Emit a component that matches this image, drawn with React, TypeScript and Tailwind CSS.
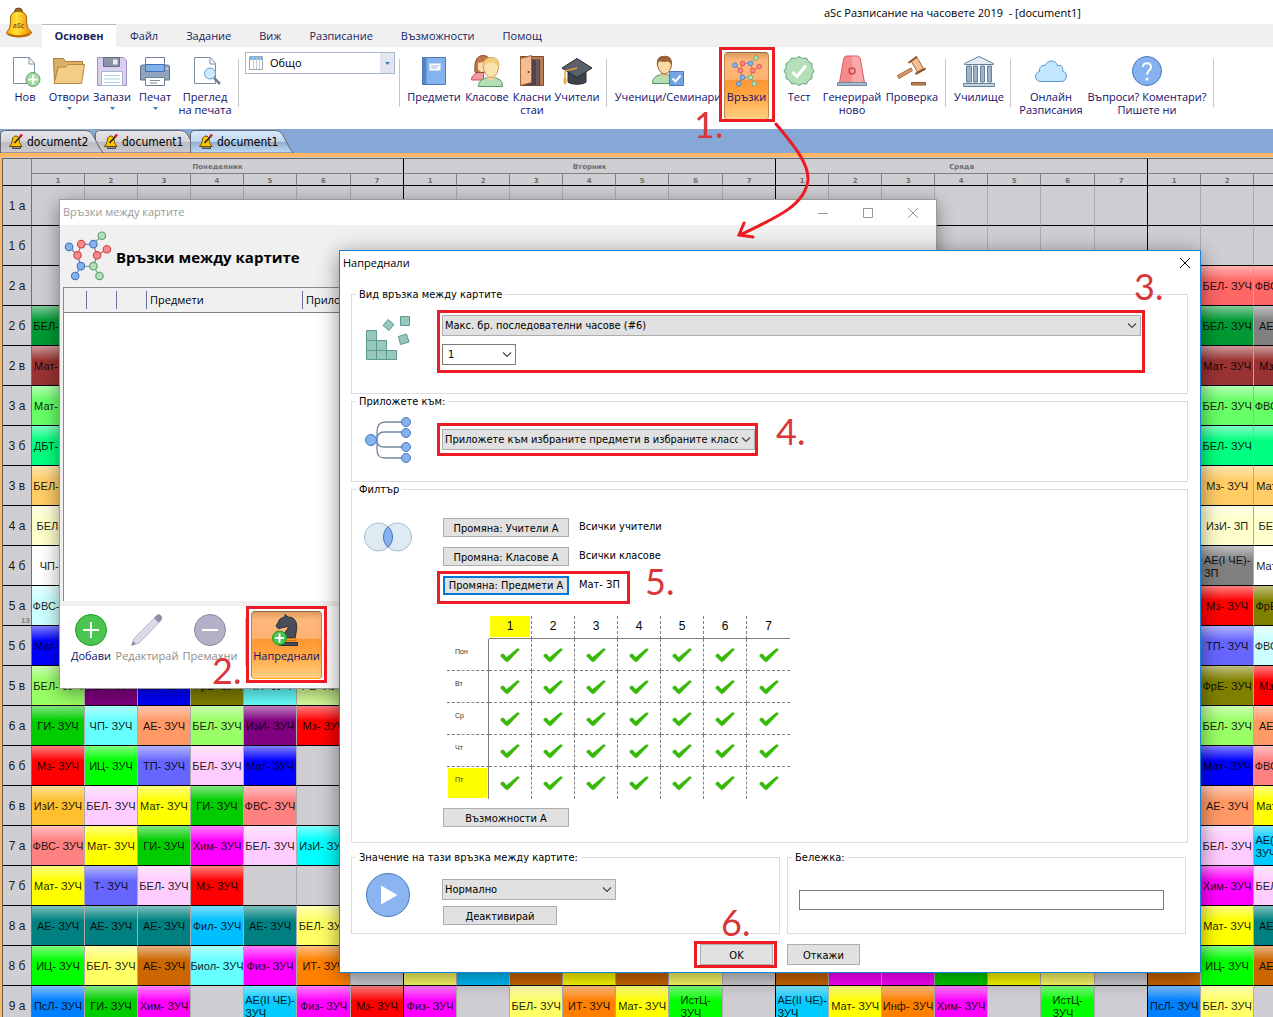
import React from 'react';

type Cell = [text: string, color: string];

const COLORS: Record<string, string> = {
    coral: 'bg-[#ff6666]',
    forest: 'bg-[#009933]',
    gray: 'bg-[#808080]',
    brick: 'bg-[#993333]',
    mint: 'bg-[#66ff66]',
    spring: 'bg-[#00ff80]',
    sand: 'bg-[#ffcc66]',
    cream: 'bg-[#ffffcc]',
    white: 'bg-white',
    ice: 'bg-[#ccffff]',
    red: 'bg-[#ff0000]',
    olive: 'bg-[#808000]',
    blue: 'bg-[#0000ff]',
    violet: 'bg-[#6666ff]',
    apple: 'bg-[#99ff66]',
    purple: 'bg-[#800080]',
    aqua: 'bg-[#66ffff]',
    pale: 'bg-[#d8ff99]',
    green: 'bg-[#00cc00]',
    peach: 'bg-[#ff9966]',
    lime: 'bg-[#00ff00]',
    pink: 'bg-[#ffccff]',
    salmon: 'bg-[#ff8080]',
    amber: 'bg-[#ffc030]',
    yellow: 'bg-[#ffff00]',
    magenta: 'bg-[#ff00ff]',
    cyan: 'bg-[#00ffff]',
    sky: 'bg-[#00ccff]',
    azure: 'bg-[#00bfff]',
    teal: 'bg-[#008080]',
    lemon: 'bg-[#ffff66]',
    brown: 'bg-[#cc6600]',
    orange: 'bg-[#ff8000]',
    royal: 'bg-[#0080ff]',
};

// cells are keyed by column index: 7 lessons a day, starting on Monday
// a line break in the text splits a long subject name over two lines
const ROWS: { name: string; note?: string; cells: Record<number, Cell> }[] = [
    { name: '1 а', cells: {} },
    { name: '1 б', cells: {} },
    { name: '2 а', cells: { 22: ['БЕЛ- ЗУЧ', 'coral'], 23: ['ФВС- ЗУЧ', 'coral'] } },
    { name: '2 б', cells: { 0: ['БЕЛ- ЗУЧ', 'forest'], 22: ['БЕЛ- ЗУЧ', 'forest'], 23: ['АЕ- ЗУЧ', 'gray'] } },
    { name: '2 в', cells: { 0: ['Мат- ЗУЧ', 'brick'], 22: ['Мат- ЗУЧ', 'brick'], 23: ['Мз- ЗУЧ', 'brick'] } },
    { name: '3 а', cells: { 0: ['Мат- ЗУЧ', 'mint'], 22: ['БЕЛ- ЗУЧ', 'mint'], 23: ['ФВС- ЗУЧ', 'mint'] } },
    { name: '3 б', cells: { 0: ['ДБТ- ЗУЧ', 'spring'], 22: ['БЕЛ- ЗУЧ', 'spring'], 23: ['', 'spring'] } },
    { name: '3 в', cells: { 0: ['БЕЛ- ЗУЧ', 'sand'], 22: ['Мз- ЗУЧ', 'sand'], 23: ['Мат- ЗУЧ', 'sand'] } },
    { name: '4 а', cells: { 0: ['БЕЛ- ЗП', 'cream'], 22: ['ИзИ- ЗП', 'cream'], 23: ['БЕЛ- ЗП', 'cream'] } },
    { name: '4 б', cells: { 0: ['ЧП- ЗП', 'white'], 22: ['АЕ(I ЧЕ)-\nЗП', 'gray'], 23: ['Мат- ЗУЧ', 'white'] } },
    { name: '5 а', note: '13', cells: { 0: ['ФВС- ЗУЧ', 'ice'], 22: ['Мз- ЗУЧ', 'red'], 23: ['ФрЕ- ЗУЧ', 'olive'] } },
    { name: '5 б', cells: { 0: ['Мат- ЗУЧ', 'blue'], 22: ['ТП- ЗУЧ', 'violet'], 23: ['ФВС- ЗУЧ', 'ice'] } },
    {
        name: '5 в',
        cells: {
            0: ['БЕЛ- ЗУЧ', 'apple'], 1: ['ИзИ- ЗУЧ', 'purple'], 2: ['Мат- ЗУЧ', 'blue'], 3: ['ФрЕ- ЗУЧ', 'olive'],
            4: ['ЧП- ЗУЧ', 'aqua'], 5: ['РЕ- ИУЧ', 'pale'], 22: ['ФрЕ- ЗУЧ', 'olive'], 23: ['Мз- ЗУЧ', 'red'],
        },
    },
    {
        name: '6 а',
        cells: {
            0: ['ГИ- ЗУЧ', 'green'], 1: ['ЧП- ЗУЧ', 'aqua'], 2: ['АЕ- ЗУЧ', 'peach'], 3: ['БЕЛ- ЗУЧ', 'apple'],
            4: ['ИзИ- ЗУЧ', 'purple'], 5: ['Мз- ЗУЧ', 'red'], 22: ['БЕЛ- ЗУЧ', 'apple'], 23: ['АЕ- ЗУЧ', 'peach'],
        },
    },
    {
        name: '6 б',
        cells: {
            0: ['Мз- ЗУЧ', 'red'], 1: ['ИЦ- ЗУЧ', 'lime'], 2: ['ТП- ЗУЧ', 'violet'], 3: ['БЕЛ- ЗУЧ', 'pink'],
            4: ['Мат- ЗУЧ', 'blue'], 22: ['Мат- ЗУЧ', 'blue'], 23: ['ФВС- ЗУЧ', 'salmon'],
        },
    },
    {
        name: '6 в',
        cells: {
            0: ['ИзИ- ЗУЧ', 'amber'], 1: ['БЕЛ- ЗУЧ', 'pink'], 2: ['Мат- ЗУЧ', 'yellow'], 3: ['ГИ- ЗУЧ', 'green'],
            4: ['ФВС- ЗУЧ', 'salmon'], 22: ['АЕ- ЗУЧ', 'peach'], 23: ['Мат- ЗУЧ', 'yellow'],
        },
    },
    {
        name: '7 а',
        cells: {
            0: ['ФВС- ЗУЧ', 'salmon'], 1: ['Мат- ЗУЧ', 'yellow'], 2: ['ГИ- ЗУЧ', 'green'], 3: ['Хим- ЗУЧ', 'magenta'],
            4: ['БЕЛ- ЗУЧ', 'pink'], 5: ['ИзИ- ЗУЧ', 'cyan'], 22: ['БЕЛ- ЗУЧ', 'pink'], 23: ['АЕ(II ЧЕ)-\nЗУЧ', 'sky'],
        },
    },
    {
        name: '7 б',
        cells: {
            0: ['Мат- ЗУЧ', 'yellow'], 1: ['Т- ЗУЧ', 'violet'], 2: ['БЕЛ- ЗУЧ', 'pink'], 3: ['Мз- ЗУЧ', 'red'],
            22: ['Хим- ЗУЧ', 'magenta'], 23: ['БЕЛ- ЗУЧ', 'pink'],
        },
    },
    {
        name: '8 а',
        cells: {
            0: ['АЕ- ЗУЧ', 'teal'], 1: ['АЕ- ЗУЧ', 'teal'], 2: ['АЕ- ЗУЧ', 'teal'], 3: ['Фил- ЗУЧ', 'azure'],
            4: ['АЕ- ЗУЧ', 'teal'], 5: ['БЕЛ- ЗУЧ', 'lemon'], 22: ['Мат- ЗУЧ', 'yellow'], 23: ['АЕ- ЗУЧ', 'teal'],
        },
    },
    {
        name: '8 б',
        cells: {
            0: ['ИЦ- ЗУЧ', 'lime'], 1: ['БЕЛ- ЗУЧ', 'lemon'], 2: ['АЕ- ЗУЧ', 'brown'], 3: ['Биол- ЗУЧ', 'aqua'],
            4: ['Физ- ЗУЧ', 'magenta'], 5: ['ИТ- ЗУЧ', 'orange'], 7: ['', 'lemon'], 8: ['', 'azure'], 9: ['', 'brown'],
            10: ['', 'yellow'], 11: ['', 'brown'], 12: ['', 'lemon'], 14: ['', 'brown'], 15: ['', 'magenta'],
            16: ['', 'magenta'], 17: ['', 'green'], 18: ['', 'yellow'], 19: ['', 'lemon'], 21: ['', 'brown'],
            22: ['ИЦ- ЗУЧ', 'lime'], 23: ['АЕ- ЗУЧ', 'brown'],
        },
    },
    {
        name: '9 а',
        cells: {
            0: ['ПсЛ- ЗУЧ', 'royal'], 1: ['ГИ- ЗУЧ', 'green'], 2: ['Хим- ЗУЧ', 'magenta'], 4: ['АЕ(II ЧЕ)-\nЗУЧ', 'sky'],
            5: ['Физ- ЗУЧ', 'magenta'], 6: ['Мз- ЗУЧ', 'red'], 7: ['Физ- ЗУЧ', 'magenta'], 9: ['БЕЛ- ЗУЧ', 'lemon'],
            10: ['ИТ- ЗУЧ', 'orange'], 11: ['Мат- ЗУЧ', 'yellow'], 12: ['ИстЦ-\nЗУЧ', 'lime'], 14: ['АЕ(II ЧЕ)-\nЗУЧ', 'sky'],
            15: ['Мат- ЗУЧ', 'yellow'], 16: ['Инф- ЗУЧ', 'orange'], 17: ['Хим- ЗУЧ', 'magenta'], 19: ['ИстЦ-\nЗУЧ', 'lime'],
            21: ['ПсЛ- ЗУЧ', 'royal'], 22: ['БЕЛ- ЗУЧ', 'lemon'],
        },
    },
];

const DAYS = ['Понеделник', 'Вторник', 'Сряда', ''];
const COLUMNS = Array.from({ length: 28 }, (_, i) => i);

/* ---------- icons ---------- */

const Svg: React.FC<{ children: React.ReactNode; className?: string; viewBox?: string }> = ({
    children,
    className = 'w-8 h-8',
    viewBox = '0 0 32 32',
}) => (
    <svg viewBox={viewBox} className={`shrink-0 ${className}`} fill="none" aria-hidden="true">
        {children}
    </svg>
);

const NewIcon = () => (
    <Svg>
        <path d="M4.500 2.500h16l5 6v20h-21z M20 2.500v6.500h5.500" fill="#fff" stroke="#7d8ea0" />
        <circle cx="24" cy="24.500" r="7" fill="#a5d9a8" stroke="#5fa272" />
        <path d="M24 20v9M19.500 24.500h9" stroke="#fff" strokeWidth="2" />
    </Svg>
);

const OpenIcon = () => (
    <Svg>
        <path d="M.5 3.500h10l2 3h17v6H5l-3.500 15z" fill="#dcae66" stroke="#a87b3a" />
        <path d="M1 28.500L5.500 12h7l3-2.500h16L28.500 28.500z" fill="#f3cd84" stroke="#b3864a" />
    </Svg>
);

const SaveIcon = () => (
    <Svg>
        <path d="M1.500 2.500h26l3 3v25h-29z" fill="#dcd0f0" stroke="#a08fc0" />
        <path d="M7.500 2.500h16v9h-16z" fill="#8b95a5" stroke="#66707f" />
        <path d="M17 4.500h4.500v5H17z" fill="#e8edf3" />
        <path d="M5.500 16.500h21v14h-21z" fill="#fff" stroke="#a9b4c8" />
        <path d="M8 20.500h16M8 24h16M8 27.500h16" stroke="#aed6f2" />
    </Svg>
);

const PrintIcon = () => (
    <Svg>
        <path d="M6.500 2.500h19v10h-19z" fill="#fff" stroke="#6f8095" />
        <path d="M1.500 12c0-2 1-2 3-2h23c2 0 3 0 3 2v13h-29z" fill="#8fa3ba" stroke="#5d7189" />
        <path d="M6.500 9.500h19v7h-19z" fill="#82b1ea" stroke="#3f6fb5" />
        <circle cx="28" cy="13.500" r="1" fill="#ffe08a" />
        <path d="M6.500 22.500h19v8h-19z" fill="#fff" stroke="#6f8095" />
        <path d="M11 25.500h10M11 28h7" stroke="#7d8ea0" />
    </Svg>
);

const PreviewIcon = () => (
    <Svg>
        <path d="M5.500 2.500h16l5 6v20h-21z M21 2.500v6.500h5.500" fill="#fff" stroke="#7d8ea0" />
        <circle cx="21" cy="18.500" r="5.500" fill="#cdeafd" stroke="#6a9ccc" />
        <path d="M25 23l6 6" stroke="#6d8096" strokeWidth="2.500" />
    </Svg>
);

const BookIcon = () => (
    <Svg>
        <path d="M4.500 2.500h23v27h-23z" fill="#85b3ef" stroke="#4a78b8" />
        <path d="M5 3h3.500v26H5z" fill="#5585c6" />
        <path d="M11.500 8.500h11v7h-11z" fill="#fff" stroke="#c3d8f5" />
        <path d="M13 11h8M13 13h6" stroke="#9db7dc" />
    </Svg>
);

const ClassesIcon = () => (
    <Svg>
        <path d="M.5 25c0-5 4-7 9-8h3v8z" fill="#f59aa3" stroke="#c9525e" />
        <path d="M4 17C3 8 5 .5 12 .5c5 0 7 3 7 8v9H5z" fill="#bf7549" stroke="#8e5230" />
        <path d="M7 8c3-1 6-1 8-3v9c-2 4-6 4-8 0z" fill="#fbdcb0" />
        <path d="M7.500 31.500c0-6 4-8 10-9h5c6 1 9 3 9 9z" fill="#b4dfb4" stroke="#4f9463" />
        <path d="M16.500 18h7v6l-3.500 2-3.500-2z" fill="#f5d193" />
        <path d="M12.500 12c-1-6 3-9.500 8-9.500 6 0 8 4 7 10-1 7-4 10-7.500 10S13 18 12.500 12z" fill="#fbe3b0" stroke="#b99a5a" />
        <path d="M12.500 12c-1-6 3-9.500 8-9.500 6 0 8 4 7 10-2-4-5-5-7-5s-6 1-8 4.500z" fill="#f0cc78" />
    </Svg>
);

const DoorIcon = () => (
    <Svg>
        <path d="M4.500 1.500h23v29h-23z" fill="#b57d54" stroke="#7c4b2b" />
        <path d="M8 4.500h16v26H8z" fill="#54414a" />
        <path d="M20 4.500h3v26h-3z" fill="#6d565c" />
        <path d="M4.500 3.500l11-3v27l-11 3z" fill="#f6bd91" stroke="#9c6239" />
        <circle cx="12.500" cy="17" r="1" fill="#6b3a22" />
    </Svg>
);

const TeacherIcon = () => (
    <Svg>
        <path d="M7 14h18v13c-3 3-15 3-18 0z" fill="#3e434b" stroke="#262a31" />
        <path d="M1 13L16 3.500 31 13 16 22.500z" fill="#5b616b" stroke="#23272e" />
        <path d="M16 13L4 16v9" stroke="#e8a33a" strokeWidth="1.500" />
        <path d="M2.500 23h3v5l-1.500 2-1.500-2z" fill="#f0ad45" />
    </Svg>
);

const StudentsIcon = () => (
    <Svg>
        <path d="M.5 28.500c0-6 4-8 9-9h4c5 1 8 3 8 9z" fill="#b4dfb4" stroke="#4f9463" />
        <path d="M8.500 15h7v5l-3.500 3-3.500-3z" fill="#ecc389" />
        <path d="M5.500 9c0-5 2-7.500 7-7.500s7 3 7 7.500-3 10-7 10-7-6-7-10z" fill="#fbd9a2" stroke="#8c5a35" />
        <path d="M5 11C4 4 7 .8 12.500 .8S21 4 19.500 11c-1-3-2-4-4-4.500-3 1-6 0-8 0-1 1-2 2-2.500 4.500z" fill="#9c6239" />
        <path d="M17.500 16.500h14v14h-14z" fill="#74a3e3" stroke="#4a78b8" />
        <path d="M20.500 23.500l3 3 5-6" stroke="#fff" strokeWidth="2" />
    </Svg>
);

const NODES: [number, number, string][] = [
    [305, 132, 'g'], [208, 165, 'b'], [244, 157, 'r'], [280, 157, 'b'], [233, 190, 'r'], [291, 190, 'r'],
    [320, 172, 'r'], [243, 222, 'b'], [280, 222, 'g'], [226, 251, 'b'], [298, 251, 'g'],
];
const FILL: Record<string, string> = { g: '#b4dfb8', b: '#86b2f0', r: '#f78b8b' };
const STROKE: Record<string, string> = { g: '#5fa272', b: '#4677bd', r: '#d0484d' };

const RelationsIcon: React.FC<{ className?: string }> = ({ className = 'w-8 h-8' }) => (
    <Svg className={className} viewBox="194 118 140 148">
        <path d="M208 165L233 190L243 222L226 251M280 157L244 157" stroke="#4677bd" strokeWidth="3" />
        <path d="M244 157L233 190M280 157L291 190L320 172M291 190L280 222" stroke="#d0484d" strokeWidth="3" />
        <path d="M280 157L305 132M243 222L280 222L298 251" stroke="#5fa272" strokeWidth="3" />
        {NODES.map(([x, y, c]) => (
            <circle key={`${x}-${y}`} cx={x} cy={y} r="11" fill={FILL[c]} stroke={STROKE[c]} strokeWidth="3.500" />
        ))}
    </Svg>
);

const TestIcon = () => (
    <Svg>
        <path
            d="M16 1.500l3.500 2 4-.5 2 3.500 3.500 2-.2 4L31 16l-2.200 3.500.2 4-3.500 2-2 3.500-4-.5-3.500 2-3.500-2-4 .5-2-3.500-3.500-2 .2-4L1 16l2.200-3.500-.2-4 3.500-2L8.500 3l4 .5z"
            fill="#b4dfb8"
            stroke="#5fa272"
        />
        <path d="M9.500 17l4.500 4.500 9-11" stroke="#fff" strokeWidth="3" />
    </Svg>
);

const SirenIcon = () => (
    <Svg>
        <path d="M3.500 27.500L8 2.500l2-1.500h12l2 1.500 4.500 25z" fill="#f78b8b" stroke="#d95c62" />
        <path d="M16 1.500h6l1.500 1.500 4 24H16z" fill="#f9a9a9" />
        <circle cx="16" cy="16" r="3" stroke="#d0484d" strokeWidth="1.500" />
        <path d="M1.500 27.500h29v3h-29z" fill="#a7bccd" stroke="#7188a0" />
    </Svg>
);

const GavelIcon = () => (
    <Svg>
        <path d="M1.500 20.500L15 13l1.500 2.500L3 23.500z" fill="#dc9a68" stroke="#a3683e" />
        <path d="M15 6l6-3.500 6.500 11-6 3.500z" fill="#f6bd91" stroke="#a3683e" />
        <path d="M12.500 8L21 1.500M19.500 19l10-5.500" stroke="#8e5733" strokeWidth="2" />
        <path d="M15.500 27.500h14v2.500h-14z" fill="#c38659" stroke="#8e5733" />
    </Svg>
);

const SchoolIcon = () => (
    <Svg>
        <path d="M1.500 8.500L16 1.500l14.500 7v1h-29z" fill="#e0ebf3" stroke="#66809a" />
        <path d="M3.500 11h5v16h-5zM10.500 11h4v16h-4zM17.500 11h4v16h-4zM24.500 11h4v16h-4z" fill="#9db3c8" stroke="#66809a" />
        <path d="M.5 28.500h31v3H.5z" fill="#c3d3e0" stroke="#66809a" />
    </Svg>
);

const CloudIcon = () => (
    <Svg>
        <path
            d="M6 26.500c-7 0-7-9-1.500-10C4 12 7 9.500 10 10.500c2-6 11-6 12.500 0 4-1 6 2 5 5.500 5.500 1 5.500 10.500-1.500 10.500z"
            fill="#c2e6fd"
            stroke="#5c93d1"
        />
    </Svg>
);

const HelpIcon = () => (
    <Svg>
        <circle cx="16" cy="16" r="14.500" fill="#86b2f0" stroke="#4677bd" />
        <path d="M12 12c0-5 8-5 8 0 0 3.500-4 3.500-4 7.500" stroke="#fff" strokeWidth="2" />
        <circle cx="16" cy="24" r="1.500" fill="#fff" />
    </Svg>
);

const AddIcon = () => (
    <Svg>
        <circle cx="16" cy="16" r="15.500" fill="#4bc451" stroke="#14a01c" />
        <path d="M16 8v16M8 16h16" stroke="#fff" strokeWidth="2" />
    </Svg>
);

const EditIcon = () => (
    <Svg>
        <path d="M.5 31.500l2.500-7L25.500 2c3-3 7 1 4.500 4.500L8 29z" fill="#dcdae8" stroke="#b4b2c6" />
        <path d="M25.500 1.500c3-3 7 1 4.500 4.500l-2.500 2.500-4.500-4.500z" fill="#8f8da6" />
        <path d="M.5 31.500l1.500-4.500 3 3z" fill="#8f8da6" />
    </Svg>
);

const RemoveIcon = () => (
    <Svg>
        <circle cx="16" cy="16" r="15.500" fill="#b3b1c8" stroke="#8c8aa6" />
        <path d="M8 16h16" stroke="#fff" strokeWidth="2" />
    </Svg>
);

const KnightIcon = () => (
    <Svg>
        <path
            d="M12 24c0-6 6-8 5-12-3 2-5 1-7 2l-3 .5-2-2.500 4-7 5-2.500V.5l3 2.500c8 0 10 7 8 16l-1 5z"
            fill="#484e59"
            stroke="#2a2e36"
        />
        <path d="M12 24.500h13v2H12z" fill="#ff9b33" stroke="#c97316" />
        <path d="M8.500 28.500h18v3h-18z" fill="#484e59" stroke="#2a2e36" />
        <circle cx="8.500" cy="24" r="7" fill="#4bc451" stroke="#14a01c" />
        <path d="M8.500 19.500v9M4 24h9" stroke="#fff" strokeWidth="2" />
    </Svg>
);

const BlocksIcon = () => (
    <Svg className="w-12 h-12" viewBox="0 0 48 48">
        <g fill="#9ac7bb" stroke="#5b9a92">
            <path d="M2.500 16.500h10v10h-10zM2.500 26.500h10v10h-10zM12.500 26.500h10v10h-10zM2.500 36.500h10v9h-10zM12.500 36.500h10v9h-10zM22.500 36.500h10v9h-10z" />
            <path d="M36.500 2.500h9v9h-9zM24 5.500l6 5-5 6-6-5zM34.500 22.500l8-2.500 2.500 8-8.500 2.500z" />
        </g>
    </Svg>
);

const TreeIcon = () => (
    <Svg className="w-12 h-12" viewBox="0 0 48 48">
        <path
            d="M42 6H21q-8 0-8 10v18q0 8 8 8h21M42 16H20q-7 0-7 8M42 31H20q-7 0-7-7"
            stroke="#7289a0"
            strokeWidth="1.300"
        />
        <circle cx="7" cy="24" r="5.500" fill="#86b2f0" stroke="#4677bd" />
        {[6, 17, 31, 42].map((y) => (
            <circle key={y} cx="42" cy={y} r="4.500" fill="#86b2f0" stroke="#4677bd" />
        ))}
    </Svg>
);

const FilterIcon = () => (
    <Svg className="w-12 h-8" viewBox="0 0 48 32">
        <circle cx="14.500" cy="16" r="14" fill="#dfebf3" stroke="#a6bdd2" />
        <circle cx="33.500" cy="16" r="14" fill="#dfebf3" stroke="#a6bdd2" />
        <path d="M24 5.700a14 14 0 0 1 0 20.600a14 14 0 0 1 0-20.600z" fill="#86b2f0" stroke="#4677bd" />
    </Svg>
);

const PlayIcon = () => (
    <Svg className="w-12 h-12" viewBox="0 0 48 48">
        <circle cx="24" cy="24" r="21.500" fill="#8ab5f0" stroke="#4677bd" />
        <path d="M17 14.500L33.500 24 17 33.500z" fill="#fff" />
    </Svg>
);

const CheckMark = () => (
    <Svg className="w-5 h-4" viewBox="0 0 20 16">
        <path d="M.5 9l1.500-2h1.500l3 3.500L17.500 1.500l2 1L8 14.500H6z" fill="#35bd05" stroke="#2fa314" strokeWidth=".5" />
    </Svg>
);

const BellLogo = () => (
    <Svg className="w-7 h-8" viewBox="0 0 28 32">
        <defs>
            <linearGradient id="bell" x1="0" x2="1">
                <stop offset="0" stopColor="#ffb000" />
                <stop offset=".4" stopColor="#ffe23a" />
                <stop offset="1" stopColor="#f08a00" />
            </linearGradient>
        </defs>
        <circle cx="13.500" cy="5" r="4" fill="#a0622a" stroke="#6b3d14" />
        <path
            d="M5.500 11c0-9 16-9 16 0 0 8 1 11 5 14 0 6.500-25 6.500-25 0C5 22 5.500 19 5.500 11z"
            fill="url(#bell)"
            stroke="#9a5a0e"
        />
        <path d="M2.500 26.500c5 3.500 17 3.500 22 0" stroke="#c36a00" strokeWidth="2" />
        <text x="13.500" y="21" fontSize="7" fontWeight="700" textAnchor="middle" fill="#a05a10" fontFamily="Open Sans">
            aSc
        </text>
    </Svg>
);

const BellIcon = () => (
    <Svg className="w-4 h-4" viewBox="0 0 16 16">
        <path d="M4.500 12.500h8v2h-8z" fill="#8895a5" stroke="#333" strokeWidth=".8" />
        <path d="M4.500 5c1-4 6-4 6.500 0 .5 4 1 5 3 7.500H1.500C3.500 10 4 9 4.500 5z" fill="#ffc400" stroke="#6b4a00" />
        <path d="M6.500 9l6-6.500" stroke="#222" strokeWidth="1.500" />
        <path d="M12 3l2-2.500" stroke="#e0161c" strokeWidth="2.500" />
    </Svg>
);

const Chevron = () => (
    <Svg className="w-[10px] h-[6px]" viewBox="0 0 10 6">
        <path d="M1 .5l4 4 4-4" stroke="#444" strokeWidth="1.200" />
    </Svg>
);

const Triangle = () => (
    <Svg className="w-[5px] h-[3px]" viewBox="0 0 5 3">
        <path d="M0 0h5L2.500 3z" fill="#4577b8" />
    </Svg>
);

/* ---------- header ---------- */

const MENU = ['Файл', 'Задание', 'Виж', 'Разписание', 'Възможности', 'Помощ'];

const Separator: React.FC<{ className?: string }> = ({ className = '' }) => (
    <div className={`w-px h-12 mt-3 shrink-0 bg-[#c6c6c6] ${className}`} />
);

const RibbonButton: React.FC<{
    icon: React.ReactNode;
    lines: string[];
    className: string;
    menu?: boolean;
    active?: boolean;
    disabled?: boolean;
}> = ({ icon, lines, className, menu, active, disabled }) => (
    <button
        disabled={disabled}
        className={`shrink-0 h-[68px] mt-[5px] flex flex-col items-center whitespace-nowrap text-[11px] leading-[13px] ${
            disabled ? 'text-[#8c8c8c]' : 'text-[#10106e]'
        } ${
            active
                ? 'pt-0.5 rounded-sm border border-[#ffab0f] border-t-[#8b6d45] border-x-[#b98a4e] bg-[linear-gradient(#dc9c5c,#fdb77c_12%,#ffb270_40%,#ff9533_41%,#ffa742_65%,#ffd083)]'
                : 'pt-[3px]'
        } ${className}`}
    >
        {icon}
        <span className="mt-[3px]">{lines[0]}</span>
        {lines[1] && <span>{lines[1]}</span>}
        {menu && (
            <span className="mt-1">
                <Triangle />
            </span>
        )}
    </button>
);

const Ribbon = () => (
    <div className="h-[82px] flex items-start bg-white pl-1">
        <RibbonButton icon={<NewIcon />} lines={['Нов']} className="w-[42px]" />
        <RibbonButton icon={<OpenIcon />} lines={['Отвори']} className="w-[46px]" menu />
        <RibbonButton icon={<SaveIcon />} lines={['Запази']} className="w-10" menu />
        <RibbonButton icon={<PrintIcon />} lines={['Печат']} className="w-[46px]" menu />
        <RibbonButton icon={<PreviewIcon />} lines={['Преглед', 'на печата']} className="w-[54px]" />
        <Separator className="ml-1.5" />
        <div className="relative ml-1.5 mt-[5px] w-[150px] h-[22px] shrink-0">
            <select
                aria-label="Изглед"
                className="block w-full h-full appearance-none border border-[#a9b6cc] bg-white pl-6 text-[11px] text-black"
            >
                <option>Общо</option>
            </select>
            <span className="absolute left-1 top-1 pointer-events-none">
                <Svg className="w-[14px] h-[14px]" viewBox="0 0 14 14">
                    <path d="M.5 .5h13v13H.5z" fill="#fff" stroke="#9aa8ba" />
                    <path d="M1 1h12v3H1z" fill="#79b5e8" />
                    <path d="M4.500 1v12M7.500 1v12M10.500 1v12" stroke="#c3cbd6" />
                </Svg>
            </span>
            <span className="absolute right-px inset-y-px w-[14px] flex items-center justify-center bg-[#e2e6f0] pointer-events-none">
                <Triangle />
            </span>
        </div>
        <Separator className="ml-1" />
        <RibbonButton icon={<BookIcon />} lines={['Предмети']} className="w-[68px]" />
        <RibbonButton icon={<ClassesIcon />} lines={['Класове']} className="w-[38px]" />
        <RibbonButton icon={<DoorIcon />} lines={['Класни', 'стаи']} className="w-[52px]" />
        <RibbonButton icon={<TeacherIcon />} lines={['Учители']} className="w-[38px]" />
        <Separator className="ml-2.5" />
        <RibbonButton icon={<StudentsIcon />} lines={['Ученици/Семинари']} className="ml-2 w-[106px]" />
        <RibbonButton icon={<RelationsIcon />} lines={['Връзки']} className="ml-[3px] w-[45px]" active />
        <RibbonButton icon={<TestIcon />} lines={['Тест']} className="ml-2.5 w-10" />
        <RibbonButton icon={<SirenIcon />} lines={['Генерирай', 'ново']} className="ml-[3px] w-[60px]" />
        <RibbonButton icon={<GavelIcon />} lines={['Проверка']} className="ml-[3px] w-[54px]" />
        <Separator className="ml-1.5" />
        <RibbonButton icon={<SchoolIcon />} lines={['Училище']} className="ml-1.5 w-[54px]" />
        <Separator className="ml-1" />
        <RibbonButton icon={<CloudIcon />} lines={['Онлайн', 'Разписания']} className="ml-1.5 w-[68px]" />
        <RibbonButton icon={<HelpIcon />} lines={['Въпроси? Коментари?', 'Пишете ни']} className="w-[124px]" />
        <Separator className="ml-1" />
    </div>
);

const Header = () => (
    <header className="relative">
        <div className="h-6 pl-[824px] pt-0.5 flex items-center text-[11px] whitespace-nowrap bg-white">
            <h1 className="whitespace-pre">{'aSc Разписание на часовете 2019  - [document1]'}</h1>
        </div>
        <div className="absolute left-[5px] top-[7px]">
            <BellLogo />
        </div>
        <nav className="h-[23px] flex bg-[#f0f0f0] pl-[42px] text-[11px] text-[#1a2560]">
            <button className="w-[74px] shrink-0 bg-white border-t border-[#b8b8b8] pt-px font-bold">Основен</button>
            {MENU.map((item) => (
                <button key={item} className="px-[14px] pt-0.5 whitespace-nowrap">
                    {item}
                </button>
            ))}
        </nav>
        <Ribbon />
    </header>
);

const DocumentTabs = () => (
    <div className="h-6 flex items-end bg-[#86a8d6]" role="tablist">
        {['document2', 'document1', 'document1'].map((name, i) => (
            <button
                key={i}
                role="tab"
                aria-selected={i === 2}
                className={`relative w-[95px] h-[23px] shrink-0 flex items-center pl-2 text-[12px] font-[DejaVu_Sans_Condensed,sans-serif] ${
                    i === 1 ? '' : 'z-10'
                }`}
            >
                <svg viewBox="0 0 104 23" className="absolute left-0 top-0 w-[104px] h-[23px]" aria-hidden="true">
                    <defs>
                        <linearGradient id={`tab${i}`} x2="0" y2="1">
                            <stop offset="0" stopColor={i === 2 ? '#d7e8fa' : '#e6e6ea'} />
                            <stop offset=".48" stopColor={i === 2 ? '#c3d9f0' : '#d6d6da'} />
                            <stop offset=".52" stopColor={i === 2 ? '#94aecb' : '#bcbcc2'} />
                            <stop offset="1" stopColor={i === 2 ? '#c0dcf8' : '#cbcbd0'} />
                        </linearGradient>
                    </defs>
                    <path
                        d="M.5 23V4q0-3.500 4-3.500h81q5 0 7 4l8 15q2 3.500 4 3.500z"
                        fill={`url(#tab${i})`}
                        stroke="#66666e"
                    />
                </svg>
                <span className="relative flex items-center gap-[3px]">
                    <BellIcon />
                    {name}
                </span>
            </button>
        ))}
    </div>
);

/* ---------- timetable ---------- */

const lineRight = (i: number) => (i % 7 === 6 ? 'border-r-black' : 'border-r-[#acacac]');

const Timetable = () => (
    <div className="border-t-4 border-l-2 border-[#ffb763] pt-px overflow-hidden bg-[#cfced3]">
        <table className="table-fixed w-[1518px] border-separate border-spacing-0 border-t border-l border-[#606060] font-[Liberation_Sans,sans-serif] text-[11px] leading-[13px] text-black/90">
            <colgroup>
                <col className="w-[29px]" />
                {COLUMNS.map((i) => (
                    <col key={i} className={i % 7 === 5 ? 'w-[54px]' : 'w-[53px]'} />
                ))}
            </colgroup>
            <thead className="text-[7px] text-[#6e6e6e] leading-[8px]">
                <tr className="h-[15px]">
                    <th rowSpan={2} className="p-0 border-r border-b border-r-[#808080] border-b-black" />
                    {DAYS.map((day, i) => (
                        <th key={i} colSpan={7} className="p-0 pt-0.5 border-r border-b border-r-black border-b-[#808080] font-bold font-[DejaVu_Sans,sans-serif]">
                            {day}
                        </th>
                    ))}
                </tr>
                <tr className="h-3">
                    {COLUMNS.map((i) => (
                        <th
                            key={i}
                            className={`p-0 pt-0.5 border-r border-b border-b-black font-[DejaVu_Sans,sans-serif] ${
                                i % 7 === 6 ? 'border-r-black' : 'border-r-[#808080]'
                            }`}
                        >
                            {(i % 7) + 1}
                        </th>
                    ))}
                </tr>
            </thead>
            <tbody>
                {ROWS.map((row) => (
                    <tr key={row.name} className="h-10">
                        <th className="relative p-0 pt-0.5 border-r border-b border-r-[#707070] border-b-black font-normal text-[12px]">
                            {row.name}
                            {row.note && (
                                <span className="absolute right-px bottom-0 text-[8px] leading-[9px] font-bold text-[#808080]">
                                    {row.note}
                                </span>
                            )}
                        </th>
                        {COLUMNS.map((i) => {
                            const cell = row.cells[i];
                            return (
                                <td key={i} className={`p-0 border-r border-b border-b-black ${lineRight(i)} ${cell ? COLORS[cell[1]] : ''}`}>
                                    {cell && (
                                        <div className="h-[39px] pt-0.5 flex items-center justify-center overflow-hidden bg-[linear-gradient(rgba(255,255,255,0.5),rgba(255,255,255,0)_38%)]">
                                            <span className="whitespace-pre">{cell[0]}</span>
                                        </div>
                                    )}
                                </td>
                            );
                        })}
                    </tr>
                ))}
            </tbody>
        </table>
    </div>
);

/* ---------- windows ---------- */

const RelationsWindow = () => (
    <section
        aria-label="Връзки между картите"
        className="absolute left-[59px] right-[336px] top-[199px] h-[490px] flex flex-col border border-[#9a9a9a] bg-[#f0f0f0] shadow-[0_4px_18px_rgba(0,0,0,0.4)]"
    >
        <div className="h-[25px] shrink-0 flex items-center justify-between bg-white pl-[3px] pr-[18px] text-[11px] text-[#999]">
            <span>Връзки между картите</span>
            <div className="flex gap-[35px]">
                <button aria-label="Минимизирай">
                    <Svg className="w-[10px] h-[10px]" viewBox="0 0 10 10">
                        <path d="M0 5.500h10" stroke="#999" />
                    </Svg>
                </button>
                <button aria-label="Максимизирай">
                    <Svg className="w-[10px] h-[10px]" viewBox="0 0 10 10">
                        <path d="M.5 .5h9v9h-9z" stroke="#999" />
                    </Svg>
                </button>
                <button aria-label="Затвори прозореца">
                    <Svg className="w-[10px] h-[10px]" viewBox="0 0 10 10">
                        <path d="M0 0l10 10M10 0L0 10" stroke="#999" />
                    </Svg>
                </button>
            </div>
        </div>
        <div className="h-[62px] shrink-0 flex items-center pl-1 gap-1">
            <RelationsIcon className="w-12 h-[50px]" />
            <h2 className="pt-0.5 text-[15px] font-bold">Връзки между картите</h2>
        </div>
        <div className="grow ml-[3px] border-t border-l border-[#8a8a8a] bg-white">
            <table className="w-full table-fixed text-[11px]">
                <thead>
                    <tr className="h-6 bg-[#f0f0f0] border-b border-[#808080] text-left">
                        {['w-[22px]', 'w-[30px]', 'w-[30px]', 'w-[156px]', ''].map((w, i) => (
                            <th key={i} className={`p-0 font-normal ${w}`}>
                                <div className={`h-[18px] leading-[18px] ${i ? 'border-l border-[#7070a0] pl-[3px]' : ''}`}>
                                    {['', '', '', 'Предмети', 'Приложете към'][i]}
                                </div>
                            </th>
                        ))}
                    </tr>
                </thead>
            </table>
        </div>
        <div className="h-[87px] shrink-0 border-t-[5px] border-[#f0f0f0] bg-white pl-[7px] flex items-start">
            <RibbonButton icon={<AddIcon />} lines={['Добави']} className="w-12" />
            <RibbonButton icon={<EditIcon />} lines={['Редактирай']} className="w-16" disabled />
            <RibbonButton icon={<RemoveIcon />} lines={['Премахни']} className="w-[62px]" disabled />
            <Separator className="ml-1" />
            <RibbonButton icon={<KnightIcon />} lines={['Напреднали']} className="ml-[5px] w-[71px]" active />
            <RibbonButton icon={<Svg>{null}</Svg>} lines={['Н', 'а']} className="ml-1 w-8" disabled />
        </div>
    </section>
);

const Group: React.FC<{ title: string; className?: string; children: React.ReactNode }> = ({
    title,
    className = '',
    children,
}) => (
    <fieldset className={`min-w-0 border border-[#dcdcdc] ${className}`}>
        <legend className="ml-1 px-[3px] h-[14px] leading-4">{title}</legend>
        {children}
    </fieldset>
);

const Select: React.FC<{ label: string; value: string; className?: string; plain?: boolean }> = ({
    label,
    value,
    className = '',
    plain,
}) => (
    <div className={`relative h-[21px] ${className}`}>
        <select
            aria-label={label}
            className={`block w-full h-full appearance-none border pt-0.5 pr-4 overflow-hidden ${
                plain ? 'bg-white border-[#7a7a7a] pl-[5px]' : 'bg-[#e1e1e1] border-[#adadad] pl-0.5'
            }`}
        >
            <option>{value}</option>
        </select>
        <span className="absolute right-1 top-2 pointer-events-none">
            <Chevron />
        </span>
    </div>
);

const Button: React.FC<{ className?: string; focused?: boolean; children: React.ReactNode }> = ({
    className = 'w-[126px] h-[19px]',
    focused,
    children,
}) => (
    <button
        className={`shrink-0 bg-[#e1e1e1] leading-[13px] whitespace-nowrap ${
            focused ? 'border-2 border-[#0078d7]' : 'border border-[#adadad] pt-px'
        } ${className}`}
    >
        {children}
    </button>
);

const WEEK = ['Пон', 'Вт', 'Ср', 'Чт', 'Пт'];
const LESSONS = [1, 2, 3, 4, 5, 6, 7];

const LessonFilter = () => (
    <table className="table-fixed w-[343px] border-separate border-spacing-0 font-[Liberation_Sans,sans-serif]">
        <thead>
            <tr className="h-[23px]">
                <th className="w-[42px] p-0 border-r border-transparent" />
                {LESSONS.map((n) => (
                    <th
                        key={n}
                        className={`w-[43px] p-0 pb-px border-b border-b-[#7c7c7c] font-normal text-[12px] ${
                            n < 7 ? 'border-r border-dashed border-r-[#808080] [border-bottom-style:solid]' : ''
                        }`}
                    >
                        <div className={`h-[21px] leading-[21px] ${n === 1 ? 'bg-[#ffff00] ml-px mr-px' : ''}`}>{n}</div>
                    </th>
                ))}
            </tr>
        </thead>
        <tbody>
            {WEEK.map((day, i) => {
                const bottom = i < 4 ? 'border-b border-dashed border-b-[#808080]' : '';
                return (
                    <tr key={day} className="h-8">
                        <th className={`p-0 border-r border-r-[#7c7c7c] text-left font-normal text-[7px] text-[#333] ${bottom} [border-right-style:solid]`}>
                            <div className={`h-[30px] leading-[24px] ml-px mr-px pl-[7px] ${i === 4 ? 'bg-[#ffff00]' : ''}`}>{day}</div>
                        </th>
                        {LESSONS.map((n) => (
                            <td key={n} className={`p-0 ${bottom} ${n < 7 ? 'border-r border-dashed border-r-[#808080]' : ''}`}>
                                <div className="flex justify-center">
                                    <CheckMark />
                                </div>
                            </td>
                        ))}
                    </tr>
                );
            })}
        </tbody>
    </table>
);

const AdvancedDialog = () => (
    <section
        role="dialog"
        aria-label="Напреднали"
        className="absolute left-[339px] right-[72px] top-[250px] border border-[#1883d7] bg-white font-[DejaVu_Sans_Condensed,Open_Sans,sans-serif] text-[11px] shadow-[0_4px_20px_rgba(0,0,0,0.45)]"
    >
        <div className="h-6 mb-3 flex items-center justify-between pl-[3px] pr-[10px] font-[Open_Sans,sans-serif]">
            <h2>Напреднали</h2>
            <button aria-label="Затвори">
                <Svg className="w-[10px] h-[10px]" viewBox="0 0 10 10">
                    <path d="M0 0l10 10M10 0L0 10" stroke="#111" />
                </Svg>
            </button>
        </div>
        <div className="pl-[11px] pr-3">
            <Group title="Вид връзка между картите" className="min-h-[107px]">
                <div className="flex items-start pl-3 pr-[42px] gap-[25px]">
                    <div className="mt-[13px]">
                        <BlocksIcon />
                    </div>
                    <div className="grow mt-[9px] h-[63px] border-[3px] border-[#ed1c24] pl-0.5 pr-px pt-0.5">
                        <Select label="Вид връзка" value="Макс. бр. последователни часове (#6)" />
                        <Select label="Брой" value="1" className="mt-2 w-[74px]" plain />
                    </div>
                </div>
            </Group>
            <Group title="Приложете към:" className="min-h-[88px]">
                <div className="flex items-start pl-3 gap-[25px]">
                    <div className="mt-2">
                        <TreeIcon />
                    </div>
                    <div className="mt-[15px] w-[321px] border-[3px] border-[#ed1c24] pl-0.5 py-[3px]">
                        <Select label="Приложете към" value="Приложете към избраните предмети в избраните класове" />
                    </div>
                </div>
            </Group>
            <Group title="Филтър" className="min-h-[361px]">
                <div className="flex items-start pl-3 gap-[31px]">
                    <div className="mt-[25px]">
                        <FilterIcon />
                    </div>
                    <div className="mt-[22px]">
                        <div className="flex flex-col gap-2.5">
                            <div className="flex items-center gap-2.5">
                                <Button>Промяна: Учители А</Button>
                                <span>Всички учители</span>
                            </div>
                            <div className="flex items-center gap-2.5">
                                <Button>Промяна: Класове А</Button>
                                <span>Всички класове</span>
                            </div>
                            <div className="relative flex items-center gap-2.5">
                                <Button focused>Промяна: Предмети А</Button>
                                <span>Мат- ЗП</span>
                                <span className="absolute -left-1.5 -top-[5px] w-[193px] h-[33px] border-[3px] border-[#ed1c24] pointer-events-none" />
                            </div>
                        </div>
                        <div className="mt-[21px] ml-1 mb-[9px]">
                            <LessonFilter />
                        </div>
                        <Button>Възможности А</Button>
                    </div>
                </div>
            </Group>
            <div className="mt-[7px] flex gap-[7px]">
                <Group title="Значение на тази връзка между картите:" className="w-[429px] min-h-[84px]">
                    <div className="flex items-start pl-3 gap-[30px]">
                        <div className="mt-[7px]">
                            <PlayIcon />
                        </div>
                        <div className="mt-[15px]">
                            <Select label="Значение" value="Нормално" className="w-[174px] mb-1.5" />
                            <Button className="ml-px w-[114px] h-[19px]">Деактивирай</Button>
                        </div>
                    </div>
                </Group>
                <Group title="Бележка:" className="grow mr-0.5">
                    <div className="pl-[11px] pr-[21px] pt-[26px]">
                        <input aria-label="Бележка" type="text" className="block w-full h-5 border border-[#7a7a7a] px-1" />
                    </div>
                </Group>
            </div>
            <div className="flex items-start pt-[7px] pl-[343px] pb-1 gap-2.5">
                <div className="border-[3px] border-[#ed1c24] pl-[3px] pr-px">
                    <Button className="block w-[73px] h-[21px]">OK</Button>
                </div>
                <Button className="w-[73px] h-[21px] mt-[3px]">Откажи</Button>
            </div>
        </div>
    </section>
);

/* ---------- tutorial marks ---------- */

const STEPS: [string, string][] = [
    ['1.', 'left-[694px] top-[102px]'],
    ['2.', 'left-[212px] top-[648px]'],
    ['3.', 'left-[1134px] top-[264px]'],
    ['4.', 'left-[776px] top-[409px]'],
    ['5.', 'left-[645px] top-[559px]'],
    ['6.', 'left-[721px] top-[900px]'],
];

const Marks = () => (
    <div className="absolute inset-0 pointer-events-none">
        <div className="absolute left-[719px] top-[47px] w-[56px] h-[75px] border-[3px] border-[#ed1c24]" />
        <div className="absolute left-[246px] top-[606px] w-[81px] h-[77px] border-[3px] border-[#ed1c24]" />
        <svg viewBox="0 0 80 120" className="absolute left-[735px] top-[122px] w-20 h-[120px]" fill="none" aria-hidden="true">
            <path d="M41 2C55 19 74 40 73 58C70 84 40 96 5 113M9 101L4 113L18 115" stroke="#ed1c24" strokeWidth="3" strokeLinecap="round" />
        </svg>
        {STEPS.map(([label, place]) => (
            <span key={label} className={`absolute font-[Lato,sans-serif] text-[36px] leading-[44px] text-[#d9363b] ${place}`}>
                {label}
            </span>
        ))}
    </div>
);

export default function App() {
    return (
        <div className="relative h-screen overflow-hidden bg-white font-[Open_Sans,sans-serif] text-black">
            <Header />
            <DocumentTabs />
            <Timetable />
            <RelationsWindow />
            <AdvancedDialog />
            <Marks />
        </div>
    );
}
